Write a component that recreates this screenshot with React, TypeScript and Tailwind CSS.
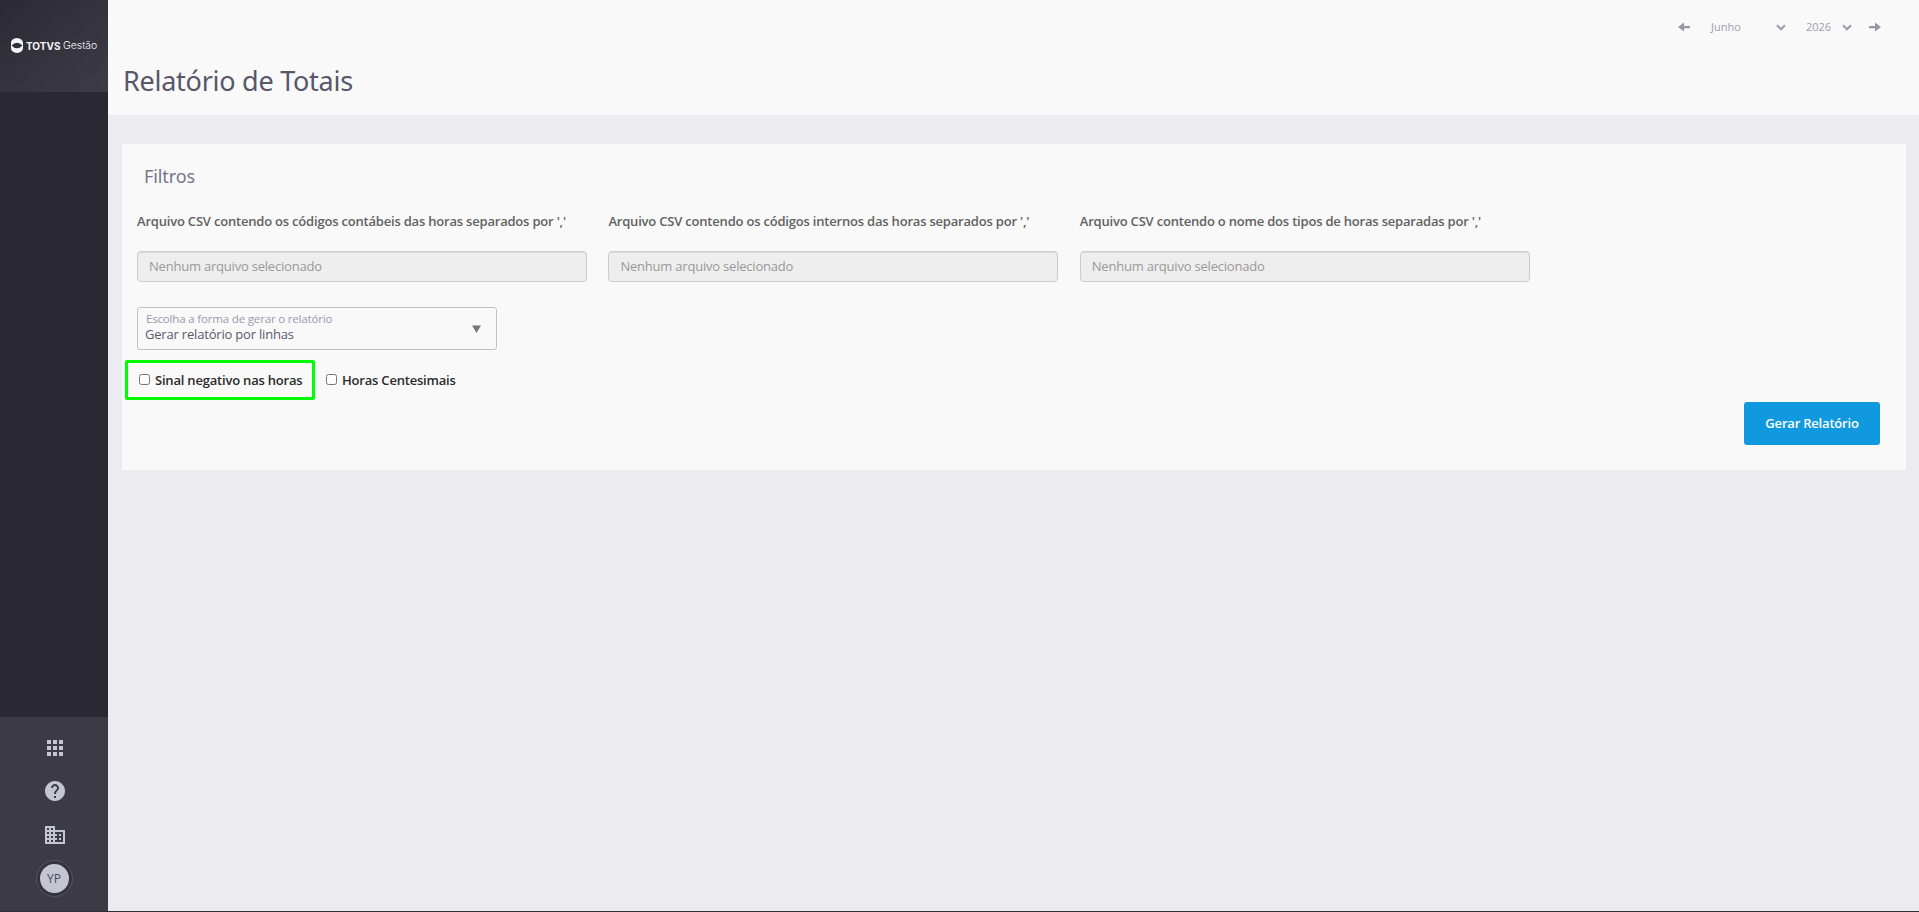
import React from 'react';
import { MdApps, MdHelp, MdOutlineBusiness } from 'react-icons/md';

interface FileFieldProps {
  label: string;
}

const fileFields = [
  "Arquivo CSV contendo os códigos contábeis das horas separados por ','",
  "Arquivo CSV contendo os códigos internos das horas separados por ','",
  "Arquivo CSV contendo o nome dos tipos de horas separadas por ','"
];

const FileField: React.FC<FileFieldProps> = ({ label }) => (
  <div className="w-[450px]">
    <div className="h-[18px] text-[13px] leading-[18px] font-semibold tracking-[-0.2px] whitespace-nowrap text-[#626262]">
      {label}
    </div>
    <div className="mt-[21px] flex h-[31px] items-center rounded-[4px] border border-[#ccc] bg-[#eee] px-[11px] text-[13px] tracking-[-0.21px] text-[#999] shadow-[inset_0_1px_1px_rgba(0,0,0,0.075)]">
      Nenhum arquivo selecionado
    </div>
  </div>
);

const Logo: React.FC = () => (
  <div className="flex h-4 items-center text-[#f4f4f6]">
    <svg className="mr-[3px] -mt-px h-[15px] w-3" viewBox="0 0 12 15" fill="currentColor">
      <path
        fillRule="evenodd"
        d="M6 0 C9.5 0.3 12 2.2 12 5 V10 C12 12.8 9.5 14.7 6 15 C2.5 14.7 0 12.8 0 10 V5 C0 2.2 2.5 0.3 6 0 Z M0.6 7.5 Q2.8 10.2 6 10.2 T11.4 7.5 Q9.2 4.8 6 4.8 T0.6 7.5 Z"
      />
    </svg>
    <span className="w-[37px] font-['Inter',sans-serif] text-[10px] leading-4 font-bold">TOTVS</span>
    <span className="font-['Inter',sans-serif] text-[10.5px] leading-4 font-light tracking-[-0.05px]">Gestão</span>
  </div>
);

const Sidebar: React.FC = () => (
  <aside className="flex w-[108px] shrink-0 flex-col bg-[#2a2933]">
    <div className="flex h-[92px] items-center bg-linear-to-br from-[#2b2a34] to-[#3c3b47] pl-[11px]">
      <Logo />
    </div>
    <div className="flex-1" />
    <div className="flex h-[194px] flex-col items-center bg-[#3c3b45] text-[#c5c5d2]">
      <MdApps className="mt-[19px] ml-px h-6 w-6" />
      <MdHelp className="mt-[19px] ml-px h-6 w-6" />
      <MdOutlineBusiness className="mt-5 ml-px h-6 w-6" />
      <div className="mt-[14px] flex h-[35px] w-[35px] shrink-0 items-center justify-center rounded-full border-[3px] border-[#34333e] bg-[#c5c5d2] text-[12px] font-medium text-[#4a4a5c] outline outline-[#53525f]">
        YP
      </div>
    </div>
  </aside>
);

const Chevron: React.FC = () => (
  <svg className="h-[7px] w-[10px]" viewBox="0 0 10 7" fill="none" stroke="#a09db2" strokeWidth="2.2">
    <path d="M1 1.3 L5 5.3 L9 1.3" />
  </svg>
);

const PeriodPicker: React.FC = () => (
  <div className="flex h-4 items-center text-[11px] text-[#a09db2]">
    <svg className="h-[10px] w-3" viewBox="0 0 12 10" fill="#9a97ab">
      <path d="M0 5 L6 0.5 V4 H12 V6.2 H6 V9.5 Z" />
    </svg>
    <span className="ml-[21px] w-[65px]">Junho</span>
    <Chevron />
    <span className="ml-5 w-[36px]">2026</span>
    <Chevron />
    <svg className="ml-[17px] h-[10px] w-3" viewBox="0 0 12 10" fill="#9a97ab">
      <path d="M12 5 L6 0.5 V4 H0 V6.2 H6 V9.5 Z" />
    </svg>
  </div>
);

const CheckOption: React.FC<{ label: string }> = ({ label }) => (
  <label className="flex items-center text-[13px] leading-[18px] font-semibold tracking-[-0.2px] text-[#2b2b2b]">
    <span className="mr-[5px] mb-px h-[11px] w-[11px] rounded-[2.5px] border border-[#767676] bg-white" />
    {label}
  </label>
);

export default function App() {
  return (
    <div className="flex h-[912px] w-[1919px] flex-col overflow-hidden bg-[#ebebf0] font-['Open_Sans',sans-serif]">
      <div className="flex min-h-0 flex-1">
        <Sidebar />
        <div className="flex-1">
          <header className="flex h-[115px] flex-col bg-[#f9f9f9]">
            <div className="flex justify-end pt-[19px] pr-[38px]">
              <PeriodPicker />
            </div>
            <h1 className="mt-[26px] ml-[15px] h-10 font-['Noto_Sans',sans-serif] text-[27px] leading-10 tracking-[-0.26px] whitespace-nowrap text-[#585769]">
              Relatório de Totais
            </h1>
          </header>

          <main className="mt-[29px] mr-[13px] ml-[14px] h-[326px] bg-[#f9f9f9] px-[15px] pt-5">
            <h2 className="ml-[7px] h-6 font-['Noto_Sans',sans-serif] text-[18px] leading-6 tracking-[-0.1px] text-[#777689]">
              Filtros
            </h2>
            <div className="mt-[24px] flex gap-[21.4px]">
              {fileFields.map((label) => (
                <FileField key={label} label={label} />
              ))}
            </div>

            <div className="mt-[25px] flex h-[43px] w-[360px] items-center justify-between rounded-[3px] border border-[#c0c0cc] pr-[15px] pl-[7px]">
              <div className="pb-[3px]">
                <div className="ml-px h-[14px] text-[11.5px] leading-[14px] tracking-[-0.17px] text-[#9b98ad]">
                  Escolha a forma de gerar o relatório
                </div>
                <div className="h-4 text-[13px] leading-4 tracking-[-0.19px] text-[#5a596c]">
                  Gerar relatório por linhas
                </div>
              </div>
              <svg className="h-2 w-[9px]" viewBox="0 0 9 8" fill="#777">
                <path d="M0 0.5 H9 L4.5 8 Z" />
              </svg>
            </div>

            <div className="mt-[10px] -ml-3 flex h-10 items-center">
              <div className="flex h-10 w-[190px] items-center rounded-[2px] border-[3px] border-[#00ff00] pl-[11px]">
                <CheckOption label="Sinal negativo nas horas" />
              </div>
              <div className="ml-[11px]">
                <CheckOption label="Horas Centesimais" />
              </div>
            </div>

            <div className="mt-[2px] mr-[11px] flex justify-end">
              <button className="h-[43px] w-[136px] rounded-[3px] bg-[#1199e0] text-[13px] font-semibold tracking-[-0.2px] text-white">
                Gerar Relatório
              </button>
            </div>
          </main>
        </div>
      </div>
      <div className="h-px bg-[#2f2d35]" />
    </div>
  );
}
